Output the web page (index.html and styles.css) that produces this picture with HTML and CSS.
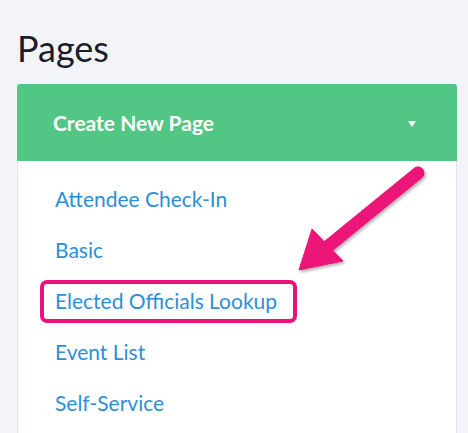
FILE: index.html
```html
<!DOCTYPE html>
<html>
<head>
<meta charset="utf-8">
<link rel="stylesheet" href="styles.css">
</head>
<body>
<div class="page">
  <h1 class="title">Pages</h1>
  <div class="dropdown">
    <button class="btn">
      <span class="btn-label">Create New Page</span>
      <span class="caret"></span>
    </button>
    <ul class="menu">
      <li class="item"><a class="link">Attendee Check-In</a></li>
      <li class="item"><a class="link">Basic</a></li>
      <li class="item"><a class="link link-highlight">Elected Officials Lookup</a></li>
      <li class="item"><a class="link">Event List</a></li>
      <li class="item"><a class="link">Self-Service</a></li>
    </ul>
  </div>
  <svg class="arrow" width="468" height="433" viewBox="0 0 468 433">
    <defs>
      <filter id="sh" x="-20%" y="-20%" width="140%" height="140%">
        <feDropShadow dx="1.5" dy="2" stdDeviation="1.5" flood-color="#000" flood-opacity="0.3"/>
      </filter>
    </defs>
    <g filter="url(#sh)" fill="#ec1379" stroke="#ec1379">
      <line x1="418" y1="173" x2="326" y2="248" stroke-width="13" stroke-linecap="round"/>
      <polygon points="299,270 312,229 343,261" stroke-width="1" stroke-linejoin="round"/>
    </g>
  </svg>
</div>
</body>
</html>
```

FILE: styles.css
```css
html, body {
  margin: 0;
  padding: 0;
}
body {
  background: #f3f4f8;
  font-family: Lato, "Open Sans", sans-serif;
  width: 468px;
  height: 433px;
  overflow: hidden;
}
.page {
  position: relative;
  padding: 26px 11px 0 17px;
}
.title {
  margin: 0 0 14px 0;
  font-size: 36px;
  line-height: 44px;
  font-weight: 400;
  color: #1a1d2c;
}
.dropdown {
  display: flex;
  flex-direction: column;
}
.btn {
  display: flex;
  align-items: center;
  justify-content: space-between;
  height: 77px;
  padding: 0 41px 0 36px;
  margin: 0;
  border: none;
  border-radius: 3px 3px 0 0;
  background: #52c785;
  color: #fff;
  font-family: inherit;
  font-size: 21px;
  font-weight: 700;
  text-align: left;
}
.caret {
  width: 0;
  height: 0;
  border-left: 4px solid transparent;
  border-right: 4px solid transparent;
  border-top: 6px solid #fff;
  margin-top: 2px;
}
.menu {
  list-style: none;
  margin: 0;
  padding: 12px 0 20px 37px;
  background: #fff;
  border: 1px solid #e2e5ee;
  border-top: none;
}
.item {
  font-size: 21px;
  line-height: 51px;
  height: 51px;
}
.link {
  color: #2c8fd6;
  text-decoration: none;
  display: inline-block;
  position: relative;
}
.link-highlight::after {
  content: "";
  position: absolute;
  left: -15px;
  right: -20px;
  top: 5px;
  bottom: 3px;
  border: 4px solid #ea1278;
  border-radius: 7px;
}
.arrow {
  position: absolute;
  left: 0;
  top: 0;
  pointer-events: none;
}
```
